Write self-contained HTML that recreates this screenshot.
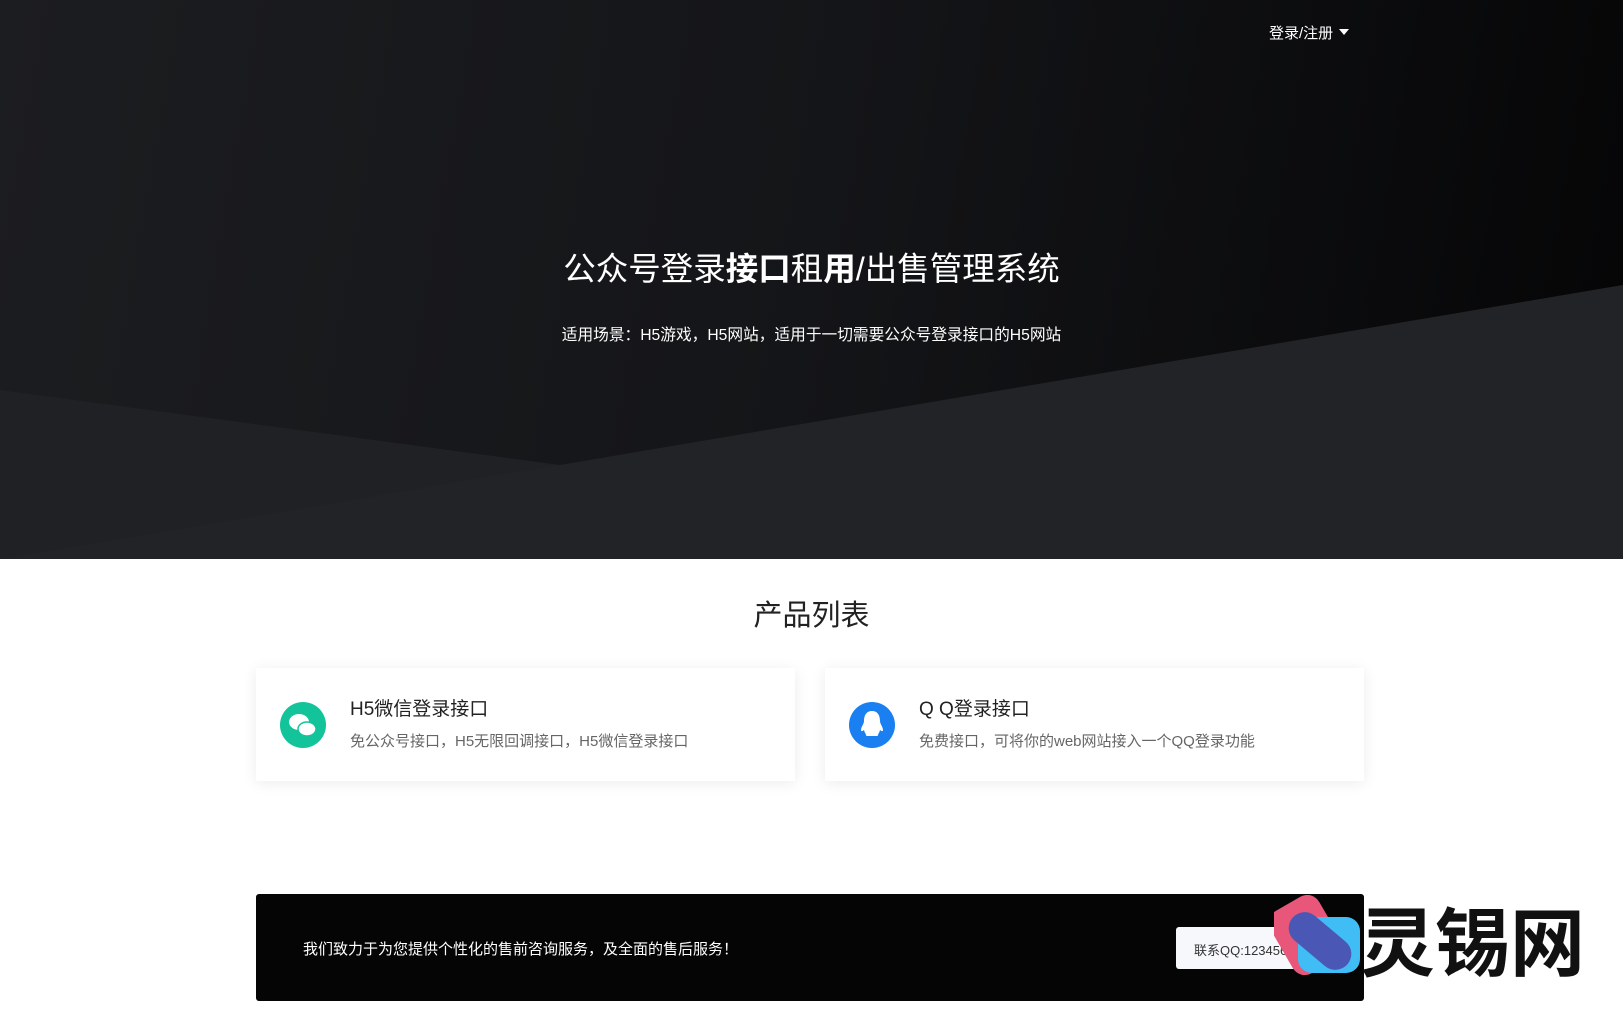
<!DOCTYPE html>
<html><head><meta charset="utf-8"><style>
*{margin:0;padding:0;box-sizing:border-box}
body{width:1623px;height:1023px;overflow:hidden;background:#fff;font-family:"Liberation Sans","Noto Sans CJK SC",sans-serif;position:relative}
.hero{position:absolute;left:0;top:0;width:1623px;height:559px;background:linear-gradient(100deg,#1c1d20 0%,#141518 50%,#050506 100%);overflow:hidden}
.hero svg{position:absolute;left:0;top:0}
.login{position:absolute;left:1269px;top:22px;color:#fff;font-size:15px}
.login:after{content:"";display:inline-block;margin-left:6px;border:5px solid transparent;border-top:6px solid #fff;vertical-align:-2px}
h1{position:absolute;top:243px;width:100%;text-align:center;color:#fff;font-size:32.5px;font-weight:normal}
.sub{position:absolute;top:322px;width:100%;text-align:center;color:#fff;font-size:15.7px}
.pt{position:absolute;top:592px;width:100%;text-align:center;font-size:29px;color:#222}
.card{position:absolute;top:668px;width:539px;height:113px;background:#fff;box-shadow:0 2px 14px rgba(0,0,0,.08)}
.card .ic{position:absolute;left:24px;top:34px;width:46px;height:46px;border-radius:50%}
.card .t{position:absolute;left:94px;top:26px;font-size:19px;color:#222}
.card .d{position:absolute;left:94px;top:62px;font-size:15px;color:#666}
.foot{position:absolute;left:256px;top:894px;width:1108px;height:107px;background:#050506;border-radius:3px}
.foot .tx{position:absolute;left:47px;top:44px;color:#fff;font-size:15px}
.foot .btn{position:absolute;left:920px;top:33px;width:160px;height:42px;background:#f7f8fb;border-radius:3px;font-size:13px;color:#333;padding:13px 18px}
.logo{position:absolute;left:1360px;top:907px;font-size:75px;font-weight:bold;color:#111;line-height:1}
</style></head><body>
<div class="hero">
<svg width="1623" height="559"><polygon points="0,390 560,465 1623,285 1623,559 0,559" fill="#202124"/><polygon points="0,559 560,465 1623,285 1623,559" fill="#242528" opacity=".6"/></svg>
<div class="login">登录/注册</div>
<h1>公众号登录<b>接口</b>租<b>用</b>/出售管理系统</h1>
<div class="sub">适用场景：H5游戏，H5网站，适用于一切需要公众号登录接口的H5网站</div>
</div>
<div class="pt">产品列表</div>
<div class="card" style="left:256px"><div class="ic" style="background:#13c49b"><svg width="46" height="46"><ellipse cx="19" cy="20" rx="10" ry="8" fill="#fff"/><ellipse cx="27" cy="27" rx="9" ry="7" fill="#fff" stroke="#13c49b" stroke-width="1.5"/></svg></div><div class="t">H5微信登录接口</div><div class="d">免公众号接口，H5无限回调接口，H5微信登录接口</div></div>
<div class="card" style="left:825px"><div class="ic" style="background:#1a7ff0"><svg width="46" height="46"><path d="M23 9c-6 0-8 5-8 10 0 3-3 6-3 9 0 2 2 1 3 0 1 4 3 5 2 6h12c-1-1 1-2 2-6 1 1 3 2 3 0 0-3-3-6-3-9 0-5-2-10-8-10z" fill="#fff"/></svg></div><div class="t">Q Q登录接口</div><div class="d">免费接口，可将你的web网站接入一个QQ登录功能</div></div>
<div class="foot"><div class="tx">我们致力于为您提供个性化的售前咨询服务，及全面的售后服务！</div><div class="btn">联系QQ:123456</div></div>
<svg style="position:absolute;left:1274px;top:895px" width="88" height="92"><rect x="4" y="4" width="56" height="72" rx="14" fill="#e8577a" transform="rotate(-30 32 40)"/><rect x="24" y="22" width="62" height="56" rx="14" fill="#40bdf5"/><rect x="10" y="30" width="72" height="32" rx="16" fill="#4a57b5" transform="rotate(40 46 46)"/></svg>
<div class="logo">灵锡网</div>
</body></html>
